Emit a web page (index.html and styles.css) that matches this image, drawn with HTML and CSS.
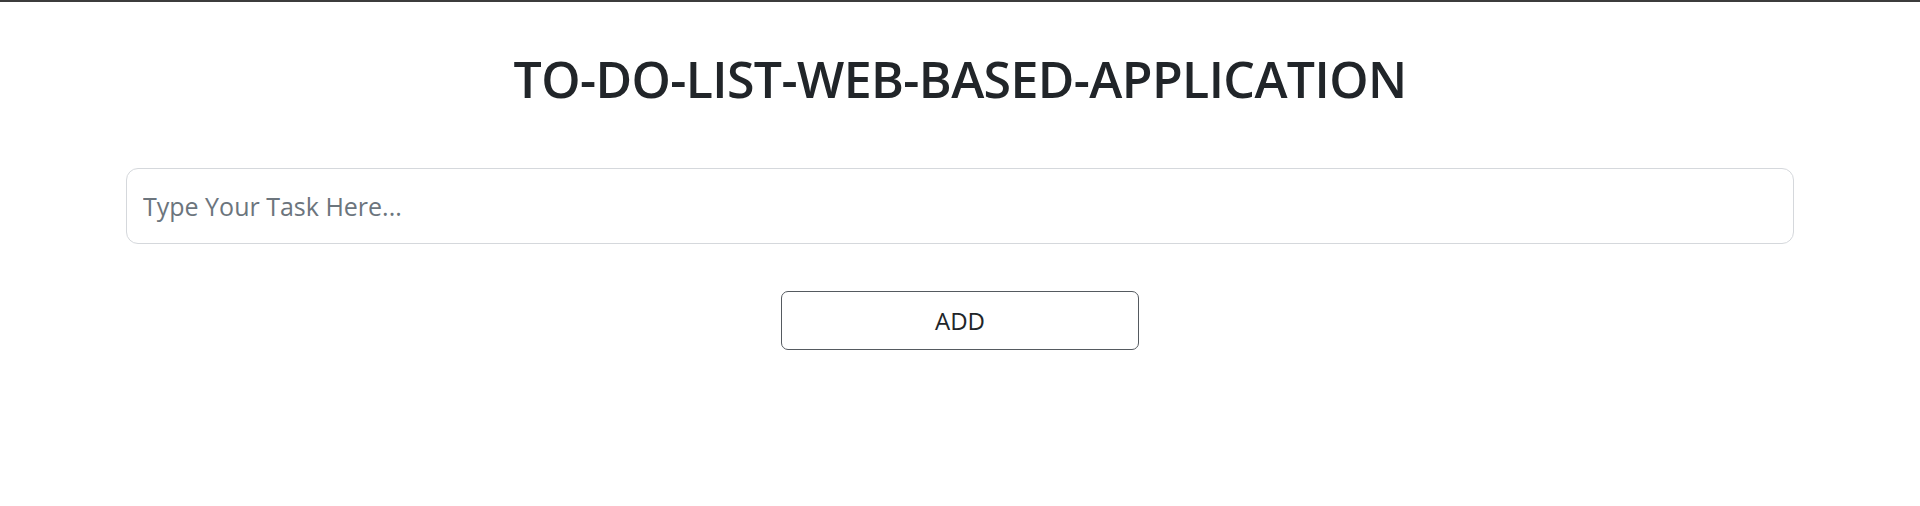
FILE: index.html
```html
<!DOCTYPE html>
<html lang="en">
<head>
<meta charset="utf-8">
<title>To-Do List</title>
<link rel="stylesheet" href="styles.css">
</head>
<body>
<main class="app">
  <h1 class="app-title">TO-DO-LIST-WEB-BASED-APPLICATION</h1>
  <form class="task-form" onsubmit="return false">
    <input class="task-input" type="text" placeholder="Type Your Task Here...">
    <button class="add-btn" type="submit">ADD</button>
  </form>
</main>
</body>
</html>
```
FILE: styles.css
```css
html, body {
  margin: 0;
  padding: 0;
  background: #ffffff;
}
body {
  border-top: 2px solid #3c3c3c;
  font-family: "Open Sans", "Noto Sans", sans-serif;
  color: #212529;
}
.app {
  padding: 0 126px;
  display: flex;
  flex-direction: column;
  align-items: center;
}
.app-title {
  margin: 47px 0 0;
  font-size: 50px;
  font-weight: 600;
  line-height: 1.2;
  letter-spacing: -0.6px;
  color: #212529;
}
.task-form {
  width: 100%;
  display: flex;
  flex-direction: column;
  align-items: center;
  margin-top: 59px;
}
.task-input {
  box-sizing: border-box;
  width: 100%;
  height: 76px;
  padding: 0 16px;
  font-family: inherit;
  font-size: 25px;
  color: #212529;
  border: 1px solid #d5d8dc;
  border-radius: 12px;
  outline: none;
}
.task-input::placeholder {
  color: #6c757d;
}
.add-btn {
  box-sizing: border-box;
  margin-top: 47px;
  width: 358px;
  height: 59px;
  font-family: inherit;
  font-size: 24px;
  color: #212529;
  background: #ffffff;
  border: 1px solid #555a60;
  border-radius: 7px;
  cursor: pointer;
}
```
